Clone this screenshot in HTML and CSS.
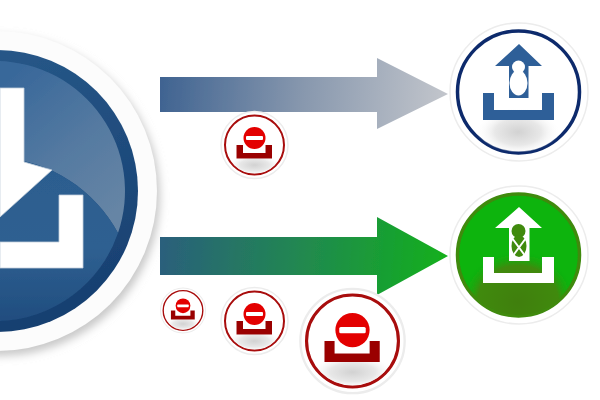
FILE: index.html
```html
<!DOCTYPE html>
<html lang="en">
<head>
  <meta charset="UTF-8">
  <title>Download and upload states</title>
  <link rel="stylesheet" href="styles.css">
</head>
<body>
  <svg class="stage" width="600" height="400" viewBox="0 0 600 400">
    <defs>
      <linearGradient id="arrow-blue" gradientUnits="userSpaceOnUse" x1="160" y1="80" x2="448" y2="105">
        <stop offset="0" stop-color="#3f6391"/>
        <stop offset="0.5" stop-color="#8898ae"/>
        <stop offset="1" stop-color="#c3c6cc"/>
      </linearGradient>
      <linearGradient id="arrow-green" gradientUnits="userSpaceOnUse" x1="160" y1="240" x2="448" y2="265">
        <stop offset="0" stop-color="#2a5f7c"/>
        <stop offset="0.5" stop-color="#21894f"/>
        <stop offset="1" stop-color="#12b01c"/>
      </linearGradient>
      <linearGradient id="big-rim" x1="0.3" y1="0" x2="0.6" y2="1">
        <stop offset="0" stop-color="#275889"/>
        <stop offset="1" stop-color="#173f70"/>
      </linearGradient>
      <linearGradient id="big-gloss" gradientUnits="userSpaceOnUse" x1="20" y1="70" x2="130" y2="200">
        <stop offset="0" stop-color="#39689a"/>
        <stop offset="0.55" stop-color="#557aa1"/>
        <stop offset="1" stop-color="#6685a5"/>
      </linearGradient>
      <linearGradient id="big-lower" gradientUnits="userSpaceOnUse" x1="40" y1="170" x2="40" y2="325">
        <stop offset="0" stop-color="#2c5d8f"/>
        <stop offset="0.5" stop-color="#2f6091"/>
        <stop offset="1" stop-color="#1f4c7e"/>
      </linearGradient>
      <radialGradient id="glow-gray">
        <stop offset="0" stop-color="#d2d2d2"/>
        <stop offset="0.55" stop-color="#e8e8e8"/>
        <stop offset="1" stop-color="#ffffff" stop-opacity="0"/>
      </radialGradient>
      <radialGradient id="glow-green">
        <stop offset="0" stop-color="#3f7f0c"/>
        <stop offset="0.7" stop-color="#3f8a0c"/>
        <stop offset="1" stop-color="#0cb40c" stop-opacity="0"/>
      </radialGradient>
      <clipPath id="clip-blue"><circle cx="518.5" cy="92" r="60"/></clipPath>
      <clipPath id="clip-green"><circle cx="518.5" cy="255" r="60"/></clipPath>
      <clipPath id="clip-red"><circle r="28.5"/></clipPath>
      <filter id="soft" x="-10%" y="-10%" width="120%" height="120%">
        <feGaussianBlur stdDeviation="0.5"/>
      </filter>
      <filter id="shadow" x="-10%" y="-10%" width="120%" height="120%">
        <feGaussianBlur stdDeviation="4"/>
      </filter>

      <symbol id="blocked" viewBox="-35 -35 70 70">
        <circle class="halo" r="33.5"/>
        <circle class="red-ring" r="29.5"/>
        <ellipse cx="0" cy="20" rx="27" ry="11" fill="url(#glow-gray)" clip-path="url(#clip-red)"/>
        <path class="red-tray" d="M-18 0H-11.5V8H11V0H17.5V13.5H-18Z"/>
        <circle class="red-disc" cx="0" cy="-7" r="11"/>
        <rect class="red-bar" x="-8.5" y="-9" width="17" height="4" rx="1"/>
      </symbol>
    </defs>

    <!-- big download badge, runs off the left edge -->
    <g filter="url(#soft)">
      <circle class="big-shadow" cx="0" cy="196" r="160" filter="url(#shadow)"/>
      <circle class="big-halo" cx="-3" cy="191" r="160"/>
      <circle cx="-3" cy="191" r="141" fill="url(#big-rim)"/>
      <path d="M-3 61A130 130 0 0 1 118 233C95 190 50 160 0 158Z" fill="url(#big-gloss)"/>
      <path d="M0 158C50 160 95 190 118 233A130 130 0 0 1 0 321Z" fill="url(#big-lower)"/>
      <path class="big-white" d="M0 88H24V162L52 170L0 217Z"/>
      <path class="big-white" d="M0 242H59V195H83V268H0Z"/>
    </g>

    <!-- arrows -->
    <g filter="url(#soft)">
      <path d="M160 77H377V58L448 94L377 129V112H160Z" fill="url(#arrow-blue)"/>
      <path d="M160 237H377V217L448 256L377 295V275H160Z" fill="url(#arrow-green)"/>
    </g>

    <!-- upload badge, blue -->
    <g filter="url(#soft)">
      <circle class="halo" cx="519" cy="92" r="69"/>
      <circle class="blue-ring" cx="518.5" cy="92" r="61"/>
      <ellipse cx="518" cy="132" rx="42" ry="24" fill="url(#glow-gray)" clip-path="url(#clip-blue)"/>
      <path class="blue-mark" d="M483 93H494V110H542V93H554V120H483Z"/>
      <path class="blue-mark" d="M519 44L542 66H528.5V98H509V66H495Z"/>
      <circle class="white-fill" cx="518.5" cy="67" r="6.5"/>
      <ellipse class="white-fill" cx="518.5" cy="83" rx="9" ry="12.5"/>
    </g>

    <!-- upload badge, green -->
    <g filter="url(#soft)">
      <circle class="halo" cx="519" cy="255" r="69"/>
      <circle class="green-ring" cx="518.5" cy="255" r="61"/>
      <ellipse cx="518" cy="302" rx="58" ry="52" fill="url(#glow-green)" clip-path="url(#clip-green)"/>
      <path class="white-fill" d="M483 257H494V273H542V257H554V283H483Z"/>
      <path class="white-fill" d="M519 207L542 228H529.5V261H509V228H495Z"/>
      <circle class="green-hole" cx="518.5" cy="231" r="7"/>
      <ellipse class="green-hole" cx="519" cy="246" rx="7.5" ry="11"/>
      <path class="green-cross" d="M512 238L526 257M526 238L512 257"/>
    </g>

    <!-- blocked badges -->
    <g filter="url(#soft)">
      <use href="#blocked" x="219.5" y="110" width="70" height="70"/>
      <use href="#blocked" x="159.5" y="287" width="47" height="47"/>
      <use href="#blocked" x="219.5" y="286" width="70" height="70"/>
      <use href="#blocked" x="298" y="286.5" width="109" height="109"/>
    </g>
  </svg>
</body>
</html>
```

FILE: styles.css
```css
* {
  margin: 0;
  padding: 0;
  box-sizing: border-box;
}

body {
  background: #fff;
  overflow: hidden;
}

.stage {
  display: block;
}

.halo {
  fill: #fff;
  stroke: #ececec;
  stroke-width: 1.5;
}

.big-halo {
  fill: #fcfcfc;
}

.big-shadow {
  fill: #c8c8c8;
}

.big-white {
  fill: #fff;
  stroke: #c3cfdc;
  stroke-width: 0.8;
}

.white-fill {
  fill: #fff;
}

.blue-ring {
  fill: #fff;
  stroke: #0e2c6c;
  stroke-width: 3.5;
}

.blue-mark {
  fill: #2f5f98;
}

.green-ring {
  fill: #0cb40c;
  stroke: #3f8a10;
  stroke-width: 3.5;
}

.green-hole {
  fill: #3f8a10;
}

.green-cross {
  fill: none;
  stroke: #fff;
  stroke-width: 2;
}

.red-ring {
  fill: #fff;
  stroke: #a80c0c;
  stroke-width: 2;
}

.red-tray {
  fill: #9a0606;
}

.red-disc {
  fill: #e30000;
}

.red-bar {
  fill: #fff;
}
```
